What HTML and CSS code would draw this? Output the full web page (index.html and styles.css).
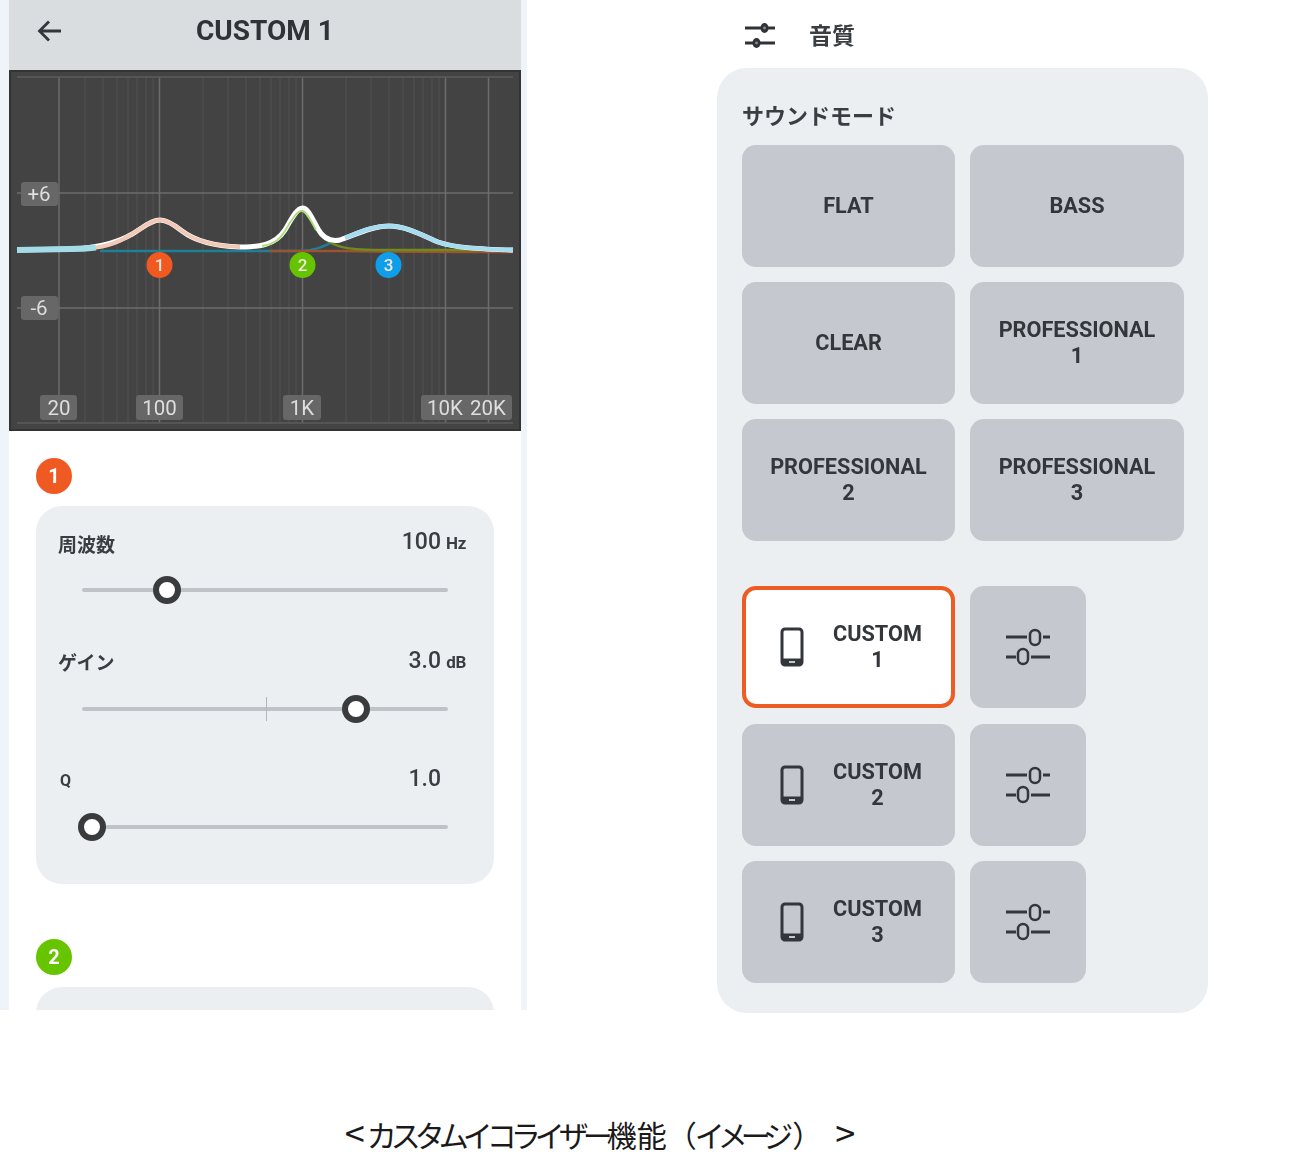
FILE: index.html
```html
<!DOCTYPE html>
<html lang="ja">
<head>
<meta charset="utf-8">
<title>カスタムイコライザー機能</title>
<link rel="stylesheet" href="styles.css">
</head>
<body>
<main class="figure">
  <div class="screens">
    <section class="phone-strip">
      <div class="phone">
        <header class="topbar">
          <svg class="back" width="28" height="28" viewBox="0 0 28 28"><path d="M25 14H4M13 4.500 3.500 14l9.500 9.500" fill="none" stroke="#33363a" stroke-width="2.800"/></svg>
          <h1 class="topbar-title">CUSTOM 1</h1>
        </header>
        <svg class="chart" width="512" height="361" viewBox="9 70 512 361">
          <rect x="9" y="70" width="512" height="361" fill="#434343"/>
          <g class="grid-minor">
            <path d="M85 77V423M103 77V423M117 77V423M128 77V423M137 77V423M146 77V423M153 77V423M203 77V423M228 77V423M246 77V423M260 77V423M271 77V423M280 77V423M289 77V423M296 77V423M346 77V423M371 77V423M389 77V423M403 77V423M414 77V423M423 77V423M432 77V423M439 77V423"/>
          </g>
          <g class="grid-major">
            <path d="M59 77V423M159.500 77V423M302.500 77V423M445.500 77V423M488.500 77V423M17 193H513M17 308H513"/>
          </g>
          <path class="grid-edge" d="M17 77H513M17 423H513"/>
          <rect class="chart-frame" x="10" y="71" width="510" height="359"/>
          <path class="band band-teal" d="M100 251H300C320 250 325 245 335 241"/>
          <path class="band band-red" d="M270 251H345C400 252 470 252 513 252"/>
          <path class="band band-olive" d="M318 232C330 247 345 250 380 250H513"/>
          <path class="curve curve-base" d="M17 250L70 249C105 248 125 240 140 229C150 222 155 220 160 220C166 220 172 223 182 231C195 241 212 246 240 247C260 247 275 245 285 230C292 218 297 208 302.500 208C308 208 312 218 318 229C323 238 330 242 340 240C355 235 372 226 389 226C405 226 420 234 438 242C455 248 480 249 513 250"/>
          <path class="curve curve-cyan" d="M17 250L70 249C80 249 88 248.500 96 247.500"/>
          <path class="curve curve-salmon" d="M96 247.500C115 245 128 237 140 229C150 222 155 220 160 220C166 220 172 223 182 231C195 241 212 246 240 247"/>
          <path class="curve curve-blue" d="M345 238C358 233 372 226 389 226C405 226 420 234 438 242C455 248 480 249 513 250"/>
          <path class="curve curve-green" d="M262 246C275 244 280 239 285 231C292 219 297 211 302 211C306 211 310 219 316 230"/>
          <circle cx="159.500" cy="265" r="13" fill="#f0591f"/>
          <circle cx="302.500" cy="265" r="13" fill="#66c300"/>
          <circle cx="388.500" cy="265" r="13" fill="#0f9fea"/>
          <text class="pin" x="159.500" y="271">1</text>
          <text class="pin" x="302.500" y="271">2</text>
          <text class="pin" x="388.500" y="271">3</text>
          <g class="tag-box">
            <rect x="21" y="182" width="37" height="24" rx="3"/>
            <rect x="21" y="296" width="37" height="24" rx="3"/>
            <rect x="40" y="395" width="37" height="25" rx="3"/>
            <rect x="136" y="395" width="47" height="25" rx="3"/>
            <rect x="283" y="395" width="38" height="25" rx="3"/>
            <rect x="421" y="395" width="91" height="25" rx="3"/>
          </g>
          <g class="tag-text">
            <text x="39" y="201">+6</text>
            <text x="39" y="315">-6</text>
            <text x="59" y="415">20</text>
            <text x="159.500" y="415">100</text>
            <text x="302" y="415">1K</text>
            <text x="445" y="415">10K</text>
            <text x="488" y="415">20K</text>
          </g>
        </svg>
        <div class="bands">
          <div class="band-badge badge-orange">1</div>
          <div class="band-card">
            <div class="param">
              <div class="param-head"><span class="param-label">周波数</span><span class="param-value">100<small class="unit">Hz</small></span></div>
              <div class="slider"><span class="thumb" style="left:85px"></span></div>
            </div>
            <div class="param">
              <div class="param-head"><span class="param-label">ゲイン</span><span class="param-value">3.0<small class="unit">dB</small></span></div>
              <div class="slider"><span class="tick"></span><span class="thumb" style="left:274px"></span></div>
            </div>
            <div class="param">
              <div class="param-head"><span class="param-label param-q">Q</span><span class="param-value">1.0<small class="unit"></small></span></div>
              <div class="slider"><span class="thumb" style="left:10px"></span></div>
            </div>
          </div>
          <div class="band-badge badge-green">2</div>
          <div class="band-card band-card-next"></div>
        </div>
      </div>
    </section>

    <section class="sound">
      <header class="sound-head">
        <svg class="tune-icon" width="32" height="30" viewBox="0 0 32 30"><g fill="none" stroke="#2f3236" stroke-width="2.800"><path d="M1 8h17M24 8h7M1 23h9M16 23h15"/></g><ellipse cx="20.500" cy="8" rx="4" ry="5" fill="#2f3236"/><ellipse cx="12.500" cy="23" rx="4" ry="5" fill="#2f3236"/><circle cx="20.500" cy="8" r="1.400" fill="#8a8d91"/><circle cx="12.500" cy="23" r="1.400" fill="#8a8d91"/></svg>
        <h2 class="sound-title">音質</h2>
      </header>
      <div class="sound-card">
        <h3 class="sound-sub">サウンドモード</h3>
        <div class="modes">
          <button class="mode">FLAT</button>
          <button class="mode">BASS</button>
          <button class="mode">CLEAR</button>
          <button class="mode">PROFESSIONAL<br>1</button>
          <button class="mode">PROFESSIONAL<br>2</button>
          <button class="mode">PROFESSIONAL<br>3</button>
        </div>
        <div class="customs">
          <button class="mode custom custom-on">
            <svg class="phone-icon" width="24" height="40" viewBox="0 0 24 40"><rect x="2" y="2" width="20" height="36" rx="3" fill="none" stroke="#33363a" stroke-width="3"/><path d="M2 32.500h20" stroke="#33363a" stroke-width="2"/><path d="M3 35h18" stroke="#33363a" stroke-width="5"/><path d="M9 35h6" stroke="#c5c9cf" stroke-width="2"/></svg>
            <span class="custom-name">CUSTOM<br>1</span>
          </button>
          <button class="mode adjust">
            <svg width="46" height="38" viewBox="0 0 46 38"><g fill="none" stroke="#33363a"><path stroke-width="3" d="M1 9h21M38 9h7M1 29h10M26 29h19"/><rect stroke-width="2.500" x="25" y="2" width="10" height="15" rx="5"/><rect stroke-width="2.500" x="13" y="21" width="10" height="15" rx="5"/></g></svg>
          </button>
          <button class="mode custom">
            <svg class="phone-icon" width="24" height="40" viewBox="0 0 24 40"><rect x="2" y="2" width="20" height="36" rx="3" fill="none" stroke="#33363a" stroke-width="3"/><path d="M2 32.500h20" stroke="#33363a" stroke-width="2"/><path d="M3 35h18" stroke="#33363a" stroke-width="5"/><path d="M9 35h6" stroke="#c5c9cf" stroke-width="2"/></svg>
            <span class="custom-name">CUSTOM<br>2</span>
          </button>
          <button class="mode adjust">
            <svg width="46" height="38" viewBox="0 0 46 38"><g fill="none" stroke="#33363a"><path stroke-width="3" d="M1 9h21M38 9h7M1 29h10M26 29h19"/><rect stroke-width="2.500" x="25" y="2" width="10" height="15" rx="5"/><rect stroke-width="2.500" x="13" y="21" width="10" height="15" rx="5"/></g></svg>
          </button>
          <button class="mode custom">
            <svg class="phone-icon" width="24" height="40" viewBox="0 0 24 40"><rect x="2" y="2" width="20" height="36" rx="3" fill="none" stroke="#33363a" stroke-width="3"/><path d="M2 32.500h20" stroke="#33363a" stroke-width="2"/><path d="M3 35h18" stroke="#33363a" stroke-width="5"/><path d="M9 35h6" stroke="#c5c9cf" stroke-width="2"/></svg>
            <span class="custom-name">CUSTOM<br>3</span>
          </button>
          <button class="mode adjust">
            <svg width="46" height="38" viewBox="0 0 46 38"><g fill="none" stroke="#33363a"><path stroke-width="3" d="M1 9h21M38 9h7M1 29h10M26 29h19"/><rect stroke-width="2.500" x="25" y="2" width="10" height="15" rx="5"/><rect stroke-width="2.500" x="13" y="21" width="10" height="15" rx="5"/></g></svg>
          </button>
        </div>
      </div>
    </section>
  </div>
  <p class="caption"><span class="angle angle-open">&lt;</span><span class="kana">カスタムイコライザー</span>機能<span class="paren">（</span><span class="kana kana-tight">イメージ</span><span class="paren paren-close">）</span><span class="angle angle-close">&gt;</span></p>
</main>
</body>
</html>
```
FILE: styles.css
```css
* { box-sizing: border-box; }
html, body { margin: 0; padding: 0; background: #fff; }
body {
  width: 1300px;
  height: 1175px;
  overflow: hidden;
  font-family: Roboto, "Noto Sans CJK JP", "Liberation Sans", sans-serif;
  color: #33363a;
}
h1, h2, h3, p { margin: 0; }

.screens { display: flex; align-items: flex-start; }

/* left screen */
.phone-strip {
  width: 527px;
  height: 1010px;
  padding: 0 6px 0 9px;
  background: #eff4fb;
  filter: blur(0.7px);
}
.phone { width: 512px; height: 1010px; background: #fff; overflow: hidden; }
.topbar {
  height: 70px;
  background: #d9dde0;
  display: flex;
  align-items: center;
  padding-left: 27px;
  padding-bottom: 9px;
}
.back { flex: none; }
.topbar-title {
  margin-left: 132px;
  font-size: 28px;
  font-weight: 700;
  line-height: 32px;
  color: #2f3236;
}
.chart { display: block; }
.grid-minor path { stroke: #535353; stroke-width: 1; fill: none; }
.grid-major path { stroke: #6c6c6c; stroke-width: 1.500; fill: none; }
.grid-edge { stroke: #5c5c5c; stroke-width: 1.500; fill: none; }
.chart-frame { fill: none; stroke: #333; stroke-width: 2; }
.band { fill: none; stroke-width: 2.500; }
.band-teal { stroke: #1e7f96; }
.band-red { stroke: #9c5330; }
.band-olive { stroke: #6f8a1f; }
.curve { fill: none; }
.curve-base { stroke: #fff; stroke-width: 5; }
.curve-cyan { stroke: #a3dbe6; stroke-width: 6; }
.curve-salmon { stroke: #f2c9b6; stroke-width: 4; }
.curve-blue { stroke: #a6dcf0; stroke-width: 4.500; }
.curve-green { stroke: #a9dd78; stroke-width: 1.800; }
.pin { font-size: 17px; font-weight: 500; fill: #f1e6de; text-anchor: middle; }
.tag-box rect { fill: #676767; }
.tag-text text { font-size: 20.500px; fill: #dedede; text-anchor: middle; }

.bands { padding: 27px 27px 0; }
.band-badge {
  width: 36px;
  height: 36px;
  border-radius: 50%;
  color: #fff;
  font-size: 20px;
  font-weight: 700;
  line-height: 36px;
  text-align: center;
}
.badge-orange { background: #ef5a23; }
.badge-green { background: #67c400; margin-top: 55px; }
.band-card {
  margin-top: 12px;
  height: 378px;
  padding: 22px 28px 0 22px;
  border-radius: 26px;
  background: #ebeff2;
  display: flex;
  flex-direction: column;
  gap: 43.500px;
}
.band-card-next { height: 60px; }
.param { height: 75px; }
.param-head {
  height: 30px;
  display: flex;
  justify-content: space-between;
  align-items: center;
}
.param-label { font-size: 19px; font-weight: 700; color: #3a3d41; }
.param-q { font-size: 16px; margin-left: 2px; }
.param-value { font-size: 23px; font-weight: 500; color: #3a3d41; display: flex; align-items: baseline; margin-top: -3px; }
.unit { width: 25px; font-size: 17px; font-weight: 700; text-align: right; letter-spacing: -0.300px; }
.slider {
  position: relative;
  height: 4px;
  margin: 30px 18px 0 24px;
  border-radius: 2px;
  background: #bfc3c8;
}
.tick {
  position: absolute;
  left: 184px;
  top: -10px;
  width: 1px;
  height: 24px;
  background: #b3b7bc;
}
.thumb {
  position: absolute;
  top: 2px;
  width: 28px;
  height: 28px;
  border: 6px solid #3a3b3d;
  border-radius: 50%;
  background: #fff;
  transform: translate(-50%, -50%);
}

/* right screen */
.sound { width: 491px; margin-left: 190px; filter: blur(0.7px); }
.sound-head { height: 68px; display: flex; align-items: center; padding: 4px 0 0 27px; }
.tune-icon { margin-top: -2px; }
.sound-title {
  margin-left: 33px;
  padding-top: 2px;
  font-size: 23px;
  font-weight: 700;
  line-height: 28px;
  color: #3a3d41;
}
.sound-card {
  height: 945px;
  padding: 33px 24px 0 25px;
  border-radius: 30px;
  background: #ebeff2;
}
.sound-sub {
  height: 44px;
  font-size: 22px;
  font-weight: 700;
  line-height: 32px;
  color: #3a3d41;
}
.modes {
  display: grid;
  grid-template-columns: 213px 214px;
  grid-auto-rows: 122px;
  gap: 15px;
}
.customs {
  margin-top: 45px;
  display: grid;
  grid-template-columns: 213px 116px;
  grid-auto-rows: 122px;
  gap: 15.600px 15px;
}
.mode {
  display: block;
  margin: 0;
  padding: 0;
  border: 0;
  border-radius: 14px;
  background: #c5c9cf;
  font-family: Roboto, sans-serif;
  font-size: 21.700px;
  font-weight: 700;
  line-height: 26px;
  color: #33363a;
  text-align: center;
}
.custom { display: flex; align-items: center; padding: 0 4px 0 38px; }
.custom-on { background: #fff; border: 4px solid #ed5d23; padding-left: 34px; padding-right: 0; }
.phone-icon { flex: none; }
.custom-name { flex: 1; }
.adjust { display: flex; align-items: center; justify-content: center; }

/* caption */
.caption {
  height: 165px;
  padding-top: 99px;
  text-align: center;
  font-family: "Noto Sans CJK JP", sans-serif;
  font-size: 30px;
  line-height: 44px;
  color: #1a1a1a;
  width: 1200px;
}
.kana { letter-spacing: -6px; }
.kana-tight { letter-spacing: -7px; }
.paren { letter-spacing: -2px; }
.paren-close { margin-left: 6px; }
.angle { font-size: 36px; line-height: 36px; }
.angle-open { margin-right: 2px; }
.angle-close { margin-left: 15px; }
```
